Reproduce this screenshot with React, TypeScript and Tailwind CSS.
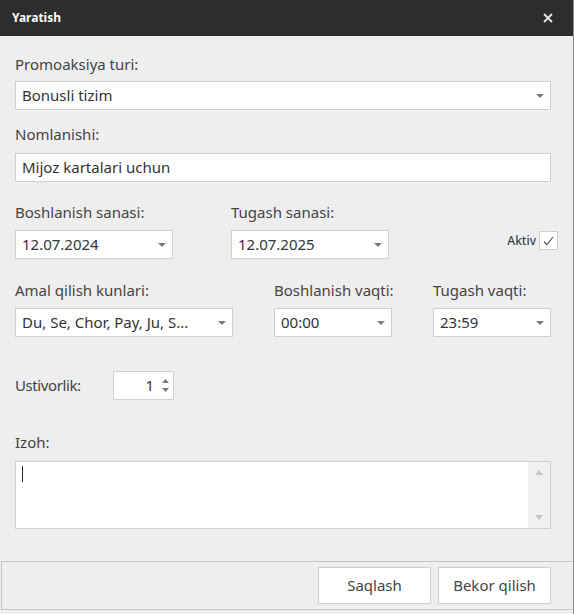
import React from "react";

const font = { fontFamily: '"Noto Sans", "Open Sans", sans-serif' };

function Caret() {
  return (
    <svg width="8" height="4" viewBox="0 0 8 4" className="shrink-0">
      <path d="M0 0 L8 0 L4 4 Z" fill="#7a7a7a" />
    </svg>
  );
}

function Select({ value, className }: { value: string; className: string }) {
  return (
    <div
      className={`flex h-[29px] items-center justify-between border border-[#cfcfcf] bg-white pl-[6px] pr-[6px] text-[15px] text-[#333] ${className}`}
    >
      <span className="truncate">{value}</span>
      <Caret />
    </div>
  );
}

function Label({ children }: { children: React.ReactNode }) {
  return <div className="text-[15px] leading-[20px] text-[#444]">{children}</div>;
}

export default function App() {
  return (
    <div
      className="flex h-[614px] w-[574px] flex-col border-r border-[#8a8a8a] bg-[#eeeeee]"
      style={font}
    >
      <div className="flex h-[36px] shrink-0 items-center justify-between bg-[#2d2d2d] pl-[12px] pr-[20px]">
        <span className="text-[12px] font-bold text-white">Yaratish</span>
        <svg width="10" height="10" viewBox="0 0 10 10">
          <path d="M1 1 L9 9 M9 1 L1 9" stroke="#e6e6e6" strokeWidth="1.8" />
        </svg>
      </div>

      <div className="flex flex-1 flex-col px-[15px] pt-[18px]">
        <Label>Promoaksiya turi:</Label>
        <Select value="Bonusli tizim" className="mt-[7px] w-[536px]" />

        <div className="mt-[14px]">
          <Label>Nomlanishi:</Label>
        </div>
        <div className="mt-[9px] flex h-[29px] w-[536px] items-center border border-[#cfcfcf] bg-white pl-[6px] text-[15px] text-[#333]">
          Mijoz kartalari uchun
        </div>

        <div className="mt-[20px] flex items-end">
          <div className="flex w-[216px] flex-col gap-[8px]">
            <Label>Boshlanish sanasi:</Label>
            <Select value="12.07.2024" className="w-[158px]" />
          </div>
          <div className="flex w-[158px] flex-col gap-[8px]">
            <Label>Tugash sanasi:</Label>
            <Select value="12.07.2025" className="w-[158px]" />
          </div>
          <div className="mb-[9px] ml-auto flex items-center gap-[3px]">
            <span className="text-[12px] font-medium text-[#444]">Aktiv</span>
            <div className="flex h-[19px] w-[19px] items-center justify-center border border-[#cfcfcf] bg-white">
              <svg width="11" height="10" viewBox="0 0 11 10">
                <path d="M1 5.5 L4 8.5 L10 1" stroke="#555" strokeWidth="1.2" fill="none" />
              </svg>
            </div>
          </div>
        </div>

        <div className="mt-[21px] flex items-end">
          <div className="flex w-[259px] flex-col gap-[8px]">
            <Label>Amal qilish kunlari:</Label>
            <Select value="Du, Se, Chor, Pay, Ju, S..." className="w-[218px]" />
          </div>
          <div className="flex w-[159px] flex-col gap-[8px]">
            <Label>Boshlanish vaqti:</Label>
            <Select value="00:00" className="w-[118px]" />
          </div>
          <div className="flex w-[118px] flex-col gap-[8px]">
            <Label>Tugash vaqti:</Label>
            <Select value="23:59" className="w-[118px]" />
          </div>
        </div>

        <div className="mt-[34px] flex items-center">
          <span className="w-[98px] text-[15px] tracking-[-0.4px] text-[#444]">Ustivorlik:</span>
          <div className="flex h-[29px] w-[61px] items-center justify-end border border-[#cfcfcf] bg-white pr-[4px]">
            <span className="text-[15px] text-[#333]">1</span>
            <div className="ml-[8px] flex flex-col gap-[5px]">
              <svg width="7" height="4" viewBox="0 0 7 4">
                <path d="M0 4 L7 4 L3.5 0 Z" fill="#7a7a7a" />
              </svg>
              <svg width="7" height="4" viewBox="0 0 7 4">
                <path d="M0 0 L7 0 L3.5 4 Z" fill="#7a7a7a" />
              </svg>
            </div>
          </div>
        </div>

        <div className="mt-[32px]">
          <Label>Izoh:</Label>
        </div>
        <div className="mt-[9px] flex h-[68px] w-[536px] border border-[#cfcfcf] bg-white">
          <div className="flex-1 pl-[6px] pt-[4px]">
            <div className="h-[16px] w-[1px] bg-[#222]" />
          </div>
          <div className="flex w-[22px] flex-col items-center justify-between bg-[#f0f0f0] py-[8px]">
            <svg width="8" height="5" viewBox="0 0 8 5">
              <path d="M0 5 L8 5 L4 0 Z" fill="#c4c4c4" />
            </svg>
            <svg width="8" height="5" viewBox="0 0 8 5">
              <path d="M0 0 L8 0 L4 5 Z" fill="#c4c4c4" />
            </svg>
          </div>
        </div>
      </div>

      <div className="mb-[4px] ml-[1px] flex h-[49px] shrink-0 items-center justify-end gap-[7px] border-t border-b border-l border-[#c4c4c4] pr-[22px]">
        <button className="h-[37px] w-[113px] border border-[#cfcfcf] bg-white text-[15px] text-[#444]">
          Saqlash
        </button>
        <button className="h-[37px] w-[113px] border border-[#cfcfcf] bg-white text-[15px] text-[#444]">
          Bekor qilish
        </button>
      </div>
    </div>
  );
}
